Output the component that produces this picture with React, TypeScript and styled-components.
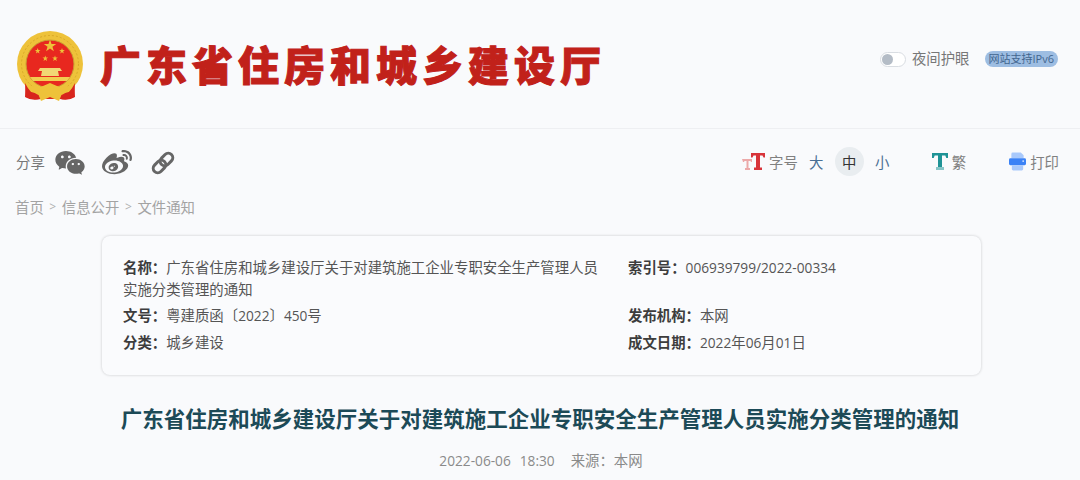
import React from 'react';
import styled, { createGlobalStyle } from 'styled-components';
import { FaWeibo } from 'react-icons/fa';
import { RiWechatFill } from 'react-icons/ri';

const GlobalStyle = createGlobalStyle`
  html, body {
    margin: 0;
    padding: 0;
    height: 480px;
    overflow: hidden;
    background-color: #f9fafc;
    font-family: "Open Sans", "Noto Sans CJK SC", sans-serif;
  }
`;

const Page = styled.div`
  width: 1080px;
  height: 480px;
  overflow: hidden;
`;

const Header = styled.header`
  height: 129px;
  box-sizing: border-box;
  border-bottom: 1px solid #eeeff2;
  padding: 31px 22px 0 17px;
  display: flex;
  justify-content: space-between;
  align-items: flex-start;
`;

const Brand = styled.div`
  display: flex;
  align-items: flex-start;
  gap: 16px;
`;

const SiteName = styled.div`
  font-size: 41px;
  line-height: 68px;
  font-weight: 900;
  letter-spacing: 5px;
  color: #c1211a;
  -webkit-text-stroke: 1px #c1211a;
  white-space: nowrap;
`;

const HeaderTools = styled.div`
  display: flex;
  align-items: center;
  margin-top: 18px;
`;

const Toggle = styled.span`
  width: 26px;
  height: 15px;
  box-sizing: border-box;
  border: 1px solid #d9dde2;
  border-radius: 8px;
  background: #fff;
  display: flex;
  align-items: center;
  padding-left: 1px;
  margin-right: 6px;
  &::before {
    content: '';
    width: 11px;
    height: 11px;
    border-radius: 50%;
    background: #b4bcc6;
  }
`;

const NightLabel = styled.span`
  font-size: 14.4px;
  line-height: 20px;
  color: #777;
  margin-right: 15px;
`;

const Badge = styled.span`
  height: 16px;
  line-height: 16px;
  padding: 0 4px;
  border-radius: 8px;
  background: #9dbde2;
  color: #42658f;
  font-size: 11px;
  white-space: nowrap;
`;

const ShareBar = styled.div`
  height: 66px;
  display: flex;
  justify-content: space-between;
  align-items: center;
  padding: 0 21px 2px 16px;
  box-sizing: border-box;
`;

const ShareGroup = styled.div`
  display: flex;
  align-items: center;
`;

const ShareLabel = styled.span`
  font-size: 14.4px;
  color: #777;
  margin-right: 9px;
`;

const ShareIcon = styled.span<{ $gap: number }>`
  display: flex;
  color: #666;
  margin-top: 4px;
  margin-right: ${(p) => p.$gap}px;
`;

const ToolGroup = styled.div`
  display: flex;
  align-items: center;
`;

const ToolLabel = styled.span<{ $gap?: number }>`
  font-size: 14.4px;
  color: #808080;
  margin-left: 4px;
  margin-right: ${(p) => p.$gap ?? 0}px;
  white-space: nowrap;
`;

const SizeButton = styled.span<{ $active?: boolean }>`
  width: 29px;
  height: 29px;
  border-radius: 50%;
  display: flex;
  align-items: center;
  justify-content: center;
  font-size: 14.4px;
  color: ${(p) => (p.$active ? '#333' : '#4a6f94')};
  background: ${(p) => (p.$active ? '#e9edf0' : 'transparent')};
`;

const SizeGroup = styled.div`
  display: flex;
  align-items: center;
  gap: 4px;
  margin-left: 4px;
  margin-right: 35px;
`;

const Breadcrumb = styled.nav`
  display: flex;
  align-items: center;
  box-sizing: border-box;
  padding: 0 0 2px 15px;
  height: 24px;
  font-size: 14.4px;
  color: #a3a3a3;
`;

const Crumb = styled.span`
  white-space: nowrap;
`;

const CrumbSep = styled.span`
  font-size: 12px;
  width: 18px;
  text-align: center;
  color: #b0b0b0;
`;

const InfoCard = styled.section`
  width: 879px;
  height: 139px;
  box-sizing: border-box;
  margin: 17px 0 0 102px;
  padding: 21px 20px 0 21px;
  border-radius: 8px;
  background: #fafbfd;
  box-shadow: 0 0 3px rgba(0, 0, 0, 0.2);
  display: grid;
  grid-template-columns: 505px 1fr;
  grid-auto-rows: min-content;
  row-gap: 4.4px;
`;

const InfoItem = styled.div`
  font-size: 14.4px;
  line-height: 22px;
  color: #555;
  max-width: 478px;
`;

const InfoKey = styled.b`
  font-weight: 700;
  color: #3d3d3d;
`;

const Num = styled.span`
  font-size: 13.7px;
`;

const Title = styled.h1`
  margin: 29px 0 0;
  text-align: center;
  font-size: 21.5px;
  line-height: 30px;
  font-weight: 700;
  color: #1c4a57;
  white-space: nowrap;
`;

const Meta = styled.div`
  margin-top: 17px;
  padding-left: 2px;
  display: flex;
  justify-content: center;
  font-size: 14.4px;
  line-height: 20px;
  color: #8a8a8a;
`;

const MetaPart = styled.span<{ $gap: number }>`
  margin-right: ${(p) => p.$gap}px;
  white-space: nowrap;
`;

const starPoints = (cx: number, cy: number, r: number) => {
  const pts: string[] = [];
  for (let i = 0; i < 10; i++) {
    const rad = i % 2 === 0 ? r : r * 0.4;
    const a = (Math.PI / 5) * i - Math.PI / 2;
    pts.push(`${cx + rad * Math.cos(a)},${cy + rad * Math.sin(a)}`);
  }
  return pts.join(' ');
};

const Emblem = () => (
  <svg width="67" height="71" viewBox="0 0 67 71">
    <path d="M9 48 L8 66 Q14 70 24 68 L43 68 Q52 70 58 66 L57 48 Z" fill="#d8251d" />
    <circle cx="33" cy="33" r="33" fill="#eec23a" />
    <circle cx="33" cy="33" r="28.500" fill="none" stroke="#d9a928" strokeWidth="1" strokeDasharray="2 2" />
    <circle cx="33" cy="33" r="24" fill="#e8281f" stroke="#c9a032" strokeWidth="1" />
    <polygon points={starPoints(33, 15, 6.5)} fill="#eec23a" />
    <polygon points={starPoints(20.7, 20, 3)} fill="#eec23a" />
    <polygon points={starPoints(45, 20, 3)} fill="#eec23a" />
    <polygon points={starPoints(28.3, 27.5, 3)} fill="#eec23a" />
    <polygon points={starPoints(38, 27.5, 3)} fill="#eec23a" />
    <path d="M23 37 L43 37 L45 40 L41 40 L42 45 L24 45 L25 40 L21 40 Z" fill="#f2d675" />
    <path d="M13 46 L53 46 L50 50 L16 50 Z" fill="#f2cc50" />
    <path d="M8 50 Q16 59 26 55 L33 52 L40 55 Q50 59 58 50 L55 60 Q46 64 40 59 L26 59 Q20 64 11 60 Z" fill="#eec23a" />
    <path d="M20 60 L33 57 L46 60 L42 70 L33 66 L24 70 Z" fill="#eec23a" />
    <path d="M8 52 L9 66 Q15 69 22 68 Q13 62 8 52 Z M58 52 L57 66 Q51 69 44 68 Q53 62 58 52 Z" fill="#d8251d" />
  </svg>
);

const LinkIcon = () => (
  <svg width="24" height="24" viewBox="0 0 24 24" fill="none" stroke="#666" strokeWidth="3">
    <rect x="11" y="1.5" width="9" height="14" rx="4.5" transform="rotate(45 15.5 8.5)" />
    <rect x="4" y="8.5" width="9" height="14" rx="4.5" transform="rotate(45 8.5 15.5)" />
  </svg>
);

const FontSizeIcon = () => (
  <svg width="23" height="17" viewBox="0 0 23 17">
    <path d="M0 6 h10 v3 h-1 l-0.5-1 h-2 v7 h1.5 v2 h-5 v-2 h1.5 v-7 h-2 l-0.5 1 h-1 Z" fill="#eca9a9" />
    <path d="M9 0 h14 v4.5 h-1.5 l-1-2 h-2.5 v12 h2 v2.5 h-8 v-2.5 h2 v-12 h-2.5 l-1 2 h-1.5 Z" fill="#d8343a" />
  </svg>
);

const TraditionalIcon = () => (
  <svg width="16" height="17" viewBox="0 0 16 17">
    <path d="M0 0 h16 v5 h-1.7 l-1-2.500 h-3.300 v11.500 h2 v0.500 h-8 v-0.500 h2 v-11.500 h-3.300 l-1 2.500 h-1.700 Z" fill="#1f9396" />
    <rect x="4" y="14.5" width="8" height="2.5" fill="#86c5c7" />
  </svg>
);

const PrintIcon = () => (
  <svg width="17" height="19" viewBox="0 0 18 19">
    <path d="M2.5 1.5 Q2.5 0 4 0 h8.500 l3 3 v3 h-13 Z" fill="#a9c9fb" />
    <path d="M1.5 6 h15 q1.500 0 1.500 1.500 v4.500 q0 1.500-1.500 1.500 h-15 q-1.500 0-1.500-1.500 v-4.500 q0-1.500 1.500-1.500 Z" fill="#3b82f6" />
    <path d="M3 13.5 h12 v4 q0 1.500-1.500 1.500 h-9 q-1.500 0-1.500-1.500 Z" fill="#a9c9fb" />
    <circle cx="15" cy="9" r="0.9" fill="#dbe9ff" />
  </svg>
);

const App: React.FC = () => {
  return (
    <Page>
      <GlobalStyle />
      <Header>
        <Brand>
          <Emblem />
          <SiteName>广东省住房和城乡建设厅</SiteName>
        </Brand>
        <HeaderTools>
          <Toggle />
          <NightLabel>夜间护眼</NightLabel>
          <Badge>网站支持IPv6</Badge>
        </HeaderTools>
      </Header>
      <ShareBar>
        <ShareGroup>
          <ShareLabel>分享</ShareLabel>
          <ShareIcon $gap={16}>
            <RiWechatFill size={32} />
          </ShareIcon>
          <ShareIcon $gap={19}>
            <FaWeibo size={30} />
          </ShareIcon>
          <ShareIcon $gap={0}>
            <LinkIcon />
          </ShareIcon>
        </ShareGroup>
        <ToolGroup>
          <FontSizeIcon />
          <ToolLabel>字号</ToolLabel>
          <SizeGroup>
            <SizeButton>大</SizeButton>
            <SizeButton $active>中</SizeButton>
            <SizeButton>小</SizeButton>
          </SizeGroup>
          <TraditionalIcon />
          <ToolLabel $gap={43}>繁</ToolLabel>
          <PrintIcon />
          <ToolLabel>打印</ToolLabel>
        </ToolGroup>
      </ShareBar>
      <Breadcrumb>
        <Crumb>首页</Crumb>
        <CrumbSep>&gt;</CrumbSep>
        <Crumb>信息公开</Crumb>
        <CrumbSep>&gt;</CrumbSep>
        <Crumb>文件通知</Crumb>
      </Breadcrumb>
      <InfoCard>
        <InfoItem>
          <InfoKey>名称：</InfoKey>广东省住房和城乡建设厅关于对建筑施工企业专职安全生产管理人员实施分类管理的通知
        </InfoItem>
        <InfoItem>
          <InfoKey>索引号：</InfoKey>
          <Num>006939799/2022-00334</Num>
        </InfoItem>
        <InfoItem>
          <InfoKey>文号：</InfoKey>粤建质函〔<Num>2022</Num>〕<Num>450</Num>号
        </InfoItem>
        <InfoItem>
          <InfoKey>发布机构：</InfoKey>本网
        </InfoItem>
        <InfoItem>
          <InfoKey>分类：</InfoKey>城乡建设
        </InfoItem>
        <InfoItem>
          <InfoKey>成文日期：</InfoKey>
          <Num>2022</Num>年<Num>06</Num>月<Num>01</Num>日
        </InfoItem>
      </InfoCard>
      <Title>广东省住房和城乡建设厅关于对建筑施工企业专职安全生产管理人员实施分类管理的通知</Title>
      <Meta>
        <MetaPart $gap={9}>
          <Num>2022-06-06</Num>
        </MetaPart>
        <MetaPart $gap={16}>
          <Num>18:30</Num>
        </MetaPart>
        <span>来源：本网</span>
      </Meta>
    </Page>
  );
};

export default App;
